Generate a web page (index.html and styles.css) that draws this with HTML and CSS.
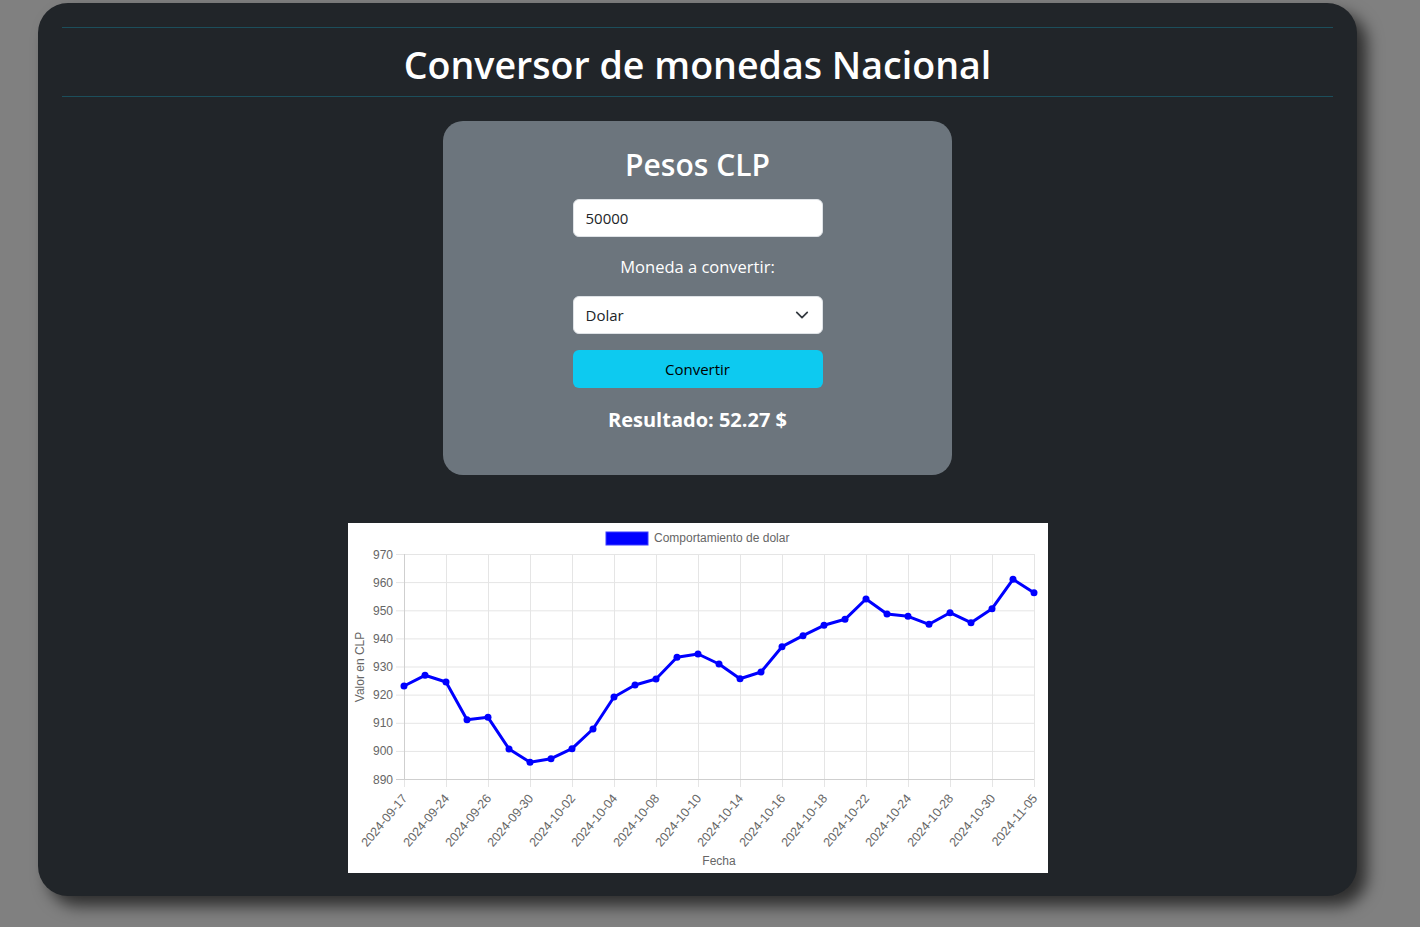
FILE: index.html
```html
<!DOCTYPE html>
<html lang="es">
<head>
<meta charset="utf-8">
<title>Conversor de monedas Nacional</title>
<link rel="stylesheet" href="styles.css">
</head>
<body>
<main class="app">
  <header class="app-header">
    <h1 class="app-title">Conversor de monedas Nacional</h1>
  </header>
  <section class="card">
    <h2 class="card-title">Pesos CLP</h2>
    <input class="field" type="text" value="50000">
    <label class="field-label">Moneda a convertir:</label>
    <div class="select">
      <span>Dolar</span>
      <svg class="chevron" width="16" height="16" viewBox="0 0 16 16"><path d="M2 5l6 6 6-6" fill="none" stroke="#343a40" stroke-width="2" stroke-linecap="round" stroke-linejoin="round"/></svg>
    </div>
    <button class="btn">Convertir</button>
    <h5 class="result">Resultado: 52.27 $</h5>
  </section>
  <section class="chart">
    <svg width="700" height="350" viewBox="0 0 700 350" font-family="'Liberation Sans', Arial, sans-serif" font-size="12" fill="#666">
      <g stroke="#e5e5e5" stroke-width="1">
        <line x1="48" y1="31.5" x2="686" y2="31.5"/>
        <line x1="48" y1="59.6" x2="686" y2="59.6"/>
        <line x1="48" y1="87.8" x2="686" y2="87.8"/>
        <line x1="48" y1="115.9" x2="686" y2="115.9"/>
        <line x1="48" y1="144" x2="686" y2="144"/>
        <line x1="48" y1="172.1" x2="686" y2="172.1"/>
        <line x1="48" y1="200.3" x2="686" y2="200.3"/>
        <line x1="48" y1="228.4" x2="686" y2="228.4"/>
        <line x1="56.5" y1="31" x2="56.5" y2="264"/>
        <line x1="98.5" y1="31" x2="98.5" y2="264"/>
        <line x1="140.5" y1="31" x2="140.5" y2="264"/>
        <line x1="182.5" y1="31" x2="182.5" y2="264"/>
        <line x1="224.5" y1="31" x2="224.5" y2="264"/>
        <line x1="266.5" y1="31" x2="266.5" y2="264"/>
        <line x1="308.5" y1="31" x2="308.5" y2="264"/>
        <line x1="350.5" y1="31" x2="350.5" y2="264"/>
        <line x1="392.5" y1="31" x2="392.5" y2="264"/>
        <line x1="434.5" y1="31" x2="434.5" y2="264"/>
        <line x1="476.5" y1="31" x2="476.5" y2="264"/>
        <line x1="518.5" y1="31" x2="518.5" y2="264"/>
        <line x1="560.5" y1="31" x2="560.5" y2="264"/>
        <line x1="602.5" y1="31" x2="602.5" y2="264"/>
        <line x1="644.5" y1="31" x2="644.5" y2="264"/>
        <line x1="686.5" y1="31" x2="686.5" y2="264"/>
      </g>
      <line x1="48" y1="256.5" x2="686" y2="256.5" stroke="#cfcfcf"/>
      <line x1="56.5" y1="31" x2="56.5" y2="256" stroke="#cfcfcf"/>
      <g text-anchor="end" dominant-baseline="central">
        <text x="45" y="31.5">970</text>
        <text x="45" y="59.6">960</text>
        <text x="45" y="87.8">950</text>
        <text x="45" y="115.9">940</text>
        <text x="45" y="144">930</text>
        <text x="45" y="172.1">920</text>
        <text x="45" y="200.3">910</text>
        <text x="45" y="228.4">900</text>
        <text x="45" y="256.5">890</text>
      </g>
      <text x="12" y="144" text-anchor="middle" dominant-baseline="central" transform="rotate(-90 12 144)">Valor en CLP</text>
      <rect x="258" y="9" width="42" height="13" fill="#0000ff" stroke="#3d3dff" stroke-width="1"/>
      <text x="306" y="15" dominant-baseline="central">Comportamiento de dolar</text>
      <g text-anchor="end" dominant-baseline="central" font-size="12.5">
        <text transform="translate(57 273) rotate(-50)">2024-09-17</text>
        <text transform="translate(99 273) rotate(-50)">2024-09-24</text>
        <text transform="translate(141 273) rotate(-50)">2024-09-26</text>
        <text transform="translate(183 273) rotate(-50)">2024-09-30</text>
        <text transform="translate(225 273) rotate(-50)">2024-10-02</text>
        <text transform="translate(267 273) rotate(-50)">2024-10-04</text>
        <text transform="translate(309 273) rotate(-50)">2024-10-08</text>
        <text transform="translate(351 273) rotate(-50)">2024-10-10</text>
        <text transform="translate(393 273) rotate(-50)">2024-10-14</text>
        <text transform="translate(435 273) rotate(-50)">2024-10-16</text>
        <text transform="translate(477 273) rotate(-50)">2024-10-18</text>
        <text transform="translate(519 273) rotate(-50)">2024-10-22</text>
        <text transform="translate(561 273) rotate(-50)">2024-10-24</text>
        <text transform="translate(603 273) rotate(-50)">2024-10-28</text>
        <text transform="translate(645 273) rotate(-50)">2024-10-30</text>
        <text transform="translate(687 273) rotate(-50)">2024-11-05</text>
      </g>
      <text x="371" y="338" text-anchor="middle" dominant-baseline="central">Fecha</text>
      <polyline fill="none" stroke="#0000ff" stroke-width="3" stroke-linejoin="round" points="56,163 77,152.3 98,159 119,196.7 140,194.3 161,226 182,239.3 203,235.7 224,225.7 245,206 266,174 287,162 308,156 329,134.3 350,131 371,141 392,155.7 413,149 434,123.7 455,112.7 476,102.3 497,96.3 518,76 539,91 560,93.3 581,101.3 602,89.7 623,99.7 644,85.7 665,56.3 686,69.7"/>
      <g fill="#0000ff">
        <circle cx="56" cy="163" r="3.5"/><circle cx="77" cy="152.3" r="3.5"/><circle cx="98" cy="159" r="3.5"/><circle cx="119" cy="196.7" r="3.5"/><circle cx="140" cy="194.3" r="3.5"/><circle cx="161" cy="226" r="3.5"/><circle cx="182" cy="239.3" r="3.5"/><circle cx="203" cy="235.7" r="3.5"/><circle cx="224" cy="225.7" r="3.5"/><circle cx="245" cy="206" r="3.5"/><circle cx="266" cy="174" r="3.5"/><circle cx="287" cy="162" r="3.5"/><circle cx="308" cy="156" r="3.5"/><circle cx="329" cy="134.3" r="3.5"/><circle cx="350" cy="131" r="3.5"/><circle cx="371" cy="141" r="3.5"/><circle cx="392" cy="155.7" r="3.5"/><circle cx="413" cy="149" r="3.5"/><circle cx="434" cy="123.7" r="3.5"/><circle cx="455" cy="112.7" r="3.5"/><circle cx="476" cy="102.3" r="3.5"/><circle cx="497" cy="96.3" r="3.5"/><circle cx="518" cy="76" r="3.5"/><circle cx="539" cy="91" r="3.5"/><circle cx="560" cy="93.3" r="3.5"/><circle cx="581" cy="101.3" r="3.5"/><circle cx="602" cy="89.7" r="3.5"/><circle cx="623" cy="99.7" r="3.5"/><circle cx="644" cy="85.7" r="3.5"/><circle cx="665" cy="56.3" r="3.5"/><circle cx="686" cy="69.7" r="3.5"/>
      </g>
    </svg>
  </section>
</main>
</body>
</html>
```
FILE: styles.css
```css
html, body {
  margin: 0;
  padding: 0;
}
body {
  background: #808080;
  font-family: "Open Sans", "Noto Sans", sans-serif;
  color: #fff;
  height: 927px;
  overflow: hidden;
}
.app {
  box-sizing: border-box;
  width: 1319px;
  margin: 3px 0 0 38px;
  padding: 24px 24px 23px;
  background: #212529;
  border-radius: 30px;
  box-shadow: 10px 10px 16px rgba(0, 0, 0, 0.65);
  display: flex;
  flex-direction: column;
  align-items: center;
}
.app-header {
  align-self: stretch;
  border-top: 1px solid #1c4e5b;
  border-bottom: 1px solid #1c4e5b;
  height: 68px;
  display: flex;
  align-items: center;
  justify-content: center;
}
.app-title {
  margin: 5px 0 0;
  font-size: 37.6px;
  font-weight: 600;
  line-height: 1.2;
}
.card {
  box-sizing: border-box;
  width: 509px;
  height: 354px;
  margin-top: 24px;
  background: #6c757d;
  border-radius: 20px;
  display: flex;
  flex-direction: column;
  align-items: center;
  padding-top: 25px;
}
.card-title {
  margin: 0 0 16px;
  font-size: 30px;
  font-weight: 600;
  line-height: 37px;
}
.field, .select {
  box-sizing: border-box;
  width: 250px;
  height: 38px;
  background: #fff;
  border: 1px solid #dee2e6;
  border-radius: 6px;
  padding: 0 12px;
  font-family: inherit;
  font-size: 15px;
  color: #212529;
}
.field {
  outline: none;
}
.field-label {
  margin: 18px 0 17px;
  font-size: 16.5px;
  line-height: 24px;
}
.select {
  display: flex;
  align-items: center;
  justify-content: space-between;
  padding-right: 13px;
}
.chevron {
  width: 14px;
  height: 14px;
}
.btn {
  box-sizing: border-box;
  width: 250px;
  height: 38px;
  margin-top: 16px;
  background: #0dcaf0;
  border: none;
  border-radius: 6px;
  font-family: inherit;
  font-size: 15px;
  color: #000;
}
.result {
  margin: 20px 0 0;
  font-size: 20px;
  font-weight: 700;
  line-height: 24px;
}
.chart {
  width: 700px;
  height: 350px;
  margin-top: 48px;
  background: #fff;
}
.chart svg {
  display: block;
}
```
